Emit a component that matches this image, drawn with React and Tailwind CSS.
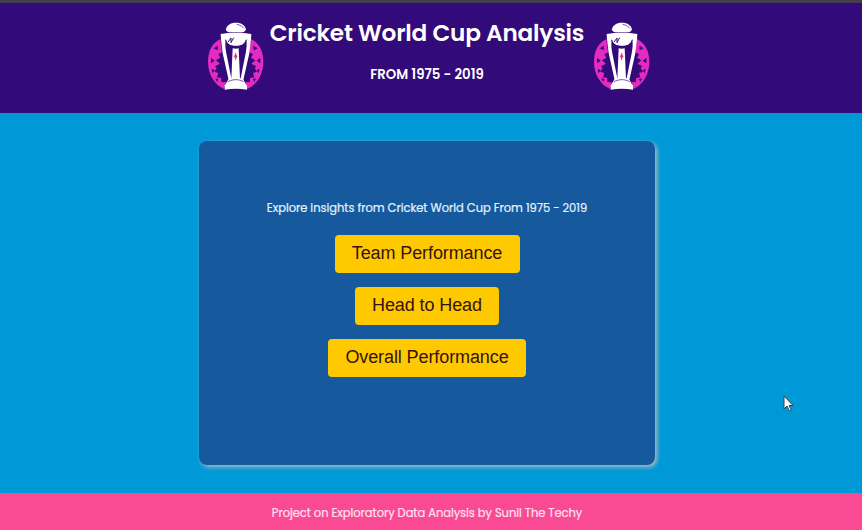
function Trophy() {
  return (
    <svg viewBox="0 0 216 252" className="h-[84px] w-[72px] shrink-0" aria-hidden="true">
      <g fill="#e32bc0">
        <path d="M61 75C37 87 24 111 24 143c0 39 19 68 48 82l6-20-14-1 0-12-13-2 4-13-12-4 7-11-5-5 15-8-12-10 13-8-6-10 11-6z" />
        <path d="M153 75c24 12 37 36 37 68 0 39-19 68-48 82l-6-20 14-1 0-12 13-2-4-13 12-4-7-11 5-5-15-8 12-10-13-8 6-10-11-6z" />
      </g>
      <g fill="#330a79">
        <path d="M41 103l13-8-1 14zM173 103l-13-8 1 14z" />
        <path d="M33 131l11 9-11 8zM181 131l-11 9 11 8z" />
        <path d="M35 164l9 5-6 9zM179 164l-9 5 6 9z" />
        <path d="M46 193l9 2-4 9zM168 193l-9 2 4 9z" />
      </g>
      <path d="M78 47C79 34 91 26 108 26s28 8 30 21z" fill="#fff" />
      <path d="M110 31c11 2 18 7 22 13" fill="none" stroke="#330a79" strokeWidth="2" />
      <path d="M77 45c18-5 43-5 61 0-2 8-8 10-15 10H92c-7 0-13-2-15-10z" fill="#fff" />
      <path d="M62 60c28-5 64-5 92 0l-1 16-5 42-18 80h-9l16-80c3-17 4-26 2-40H77c-2 14-1 23 2 40l16 80h-9L68 118l-5-42z" fill="#fff" />
      <path d="M75 65h65c0 21-11 31-32 31S75 86 75 65z" fill="#fff" />
      <path d="M77 77c3 14 14 20 31 20s27-6 31-20M84 84l9-12 0 14 8-15" fill="none" stroke="#330a79" strokeWidth="3" />
      <path d="M98 103c6 2 12 2 18 0l4 92H94z" fill="#fff" />
      <path d="M107 116l2 7 3 4-3 4-2 8-2-8-3-4 3-4z" fill="#e32b7d" stroke="#e32b7d" />
      <path d="M87 193h41l12 22c-21-4-45-4-66 0z" fill="#fff" />
      <path d="M84 203c16-8 31-8 47 0" fill="none" stroke="#330a79" strokeWidth="2" />
      <path d="M74 214c22-6 45-6 67 0v13c-22-4-45-4-67 0z" fill="#fff" />
    </svg>
  );
}

function ActionButton({ children, className }) {
  return (
    <button className={`flex h-[38px] items-center justify-center rounded-[4px] bg-[#ffc900] pb-[1px] font-['Liberation_Sans',Arial,sans-serif] text-[18px] tracking-[-0.1px] whitespace-nowrap text-[#35130f] ${className}`}>
      {children}
    </button>
  );
}

export default function App() {
  return (
    <div className="relative flex h-screen flex-col overflow-hidden bg-[#0099d8] font-['Poppins',Inter,sans-serif] text-white">
      <header className="flex h-[113px] shrink-0 justify-center border-t-[3px] border-[#433d4c] bg-[#330a79] pr-[4px]">
        <div className="flex pt-[11px]">
          <Trophy />
          <div className="flex w-[314px] flex-col items-center pr-[4px]">
            <h1 className="mt-[3px] text-[23.2px] leading-[32px] font-semibold tracking-[-0.2px] whitespace-nowrap">Cricket World Cup Analysis</h1>
            <h2 className="mt-[16px] text-[13.3px] leading-[20px] font-semibold whitespace-nowrap">FROM 1975 - 2019</h2>
          </div>
          <Trophy />
        </div>
      </header>
      <main className="flex h-[380px] shrink-0 justify-center pt-[28px] pr-[8px]">
        <section className="flex h-[324px] w-[456px] flex-col items-center rounded-[8px] bg-[#165a9d] pt-[58px] shadow-[2px_2px_4px_#b6b8b8]">
          <p className="text-[11.5px] leading-[18px] tracking-[-0.04px] whitespace-nowrap text-[#e2f3ff] [-webkit-text-stroke:0.2px_#e2f3ff]">Explore insights from Cricket World Cup From 1975 - 2019</p>
          <div className="mt-[18px] flex flex-col items-center gap-[14px]">
            <ActionButton className="w-[185px]">Team Performance</ActionButton>
            <ActionButton className="w-[144px]">Head to Head</ActionButton>
            <ActionButton className="w-[198px]">Overall Performance</ActionButton>
          </div>
        </section>
      </main>
      <footer className="flex flex-1 items-center justify-center bg-[#fa4a94] pt-[4px] pr-[8px] text-[11.5px] tracking-[-0.06px] text-[#ffe1f0]">
        <p className="whitespace-nowrap [-webkit-text-stroke:0.2px_#ffe1f0]">Project on Exploratory Data Analysis by Sunil The Techy</p>
      </footer>
      <svg viewBox="0 0 12 18" className="absolute top-[395px] left-[783px] h-[18px] w-[12px]" aria-hidden="true">
        <path d="M1 1v13l3-3 2.3 5 2-1-2.3-4.500H10z" fill="#fff" stroke="#24465c" strokeWidth="1" />
      </svg>
    </div>
  );
}
